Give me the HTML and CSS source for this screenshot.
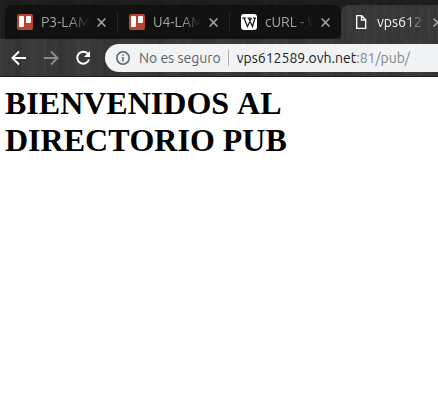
FILE: index.html
```
<!DOCTYPE html>
<html lang="es">
<head>
<meta charset="utf-8">
<title>vps612589.ovh.net:81/pub/</title>
<link rel="stylesheet" href="styles.css">
</head>
<body>
<header class="browser">
  <div class="tabs" role="tablist">
    <div class="tab" role="tab">
      <svg class="favicon" viewBox="0 0 16 16"><rect width="16" height="16" rx="2" fill="#b8432f"/><rect x="2" y="2" width="5" height="11" rx="1" fill="#fff"/><rect x="9" y="2" width="5" height="7" rx="1" fill="#fff"/></svg>
      <span class="title">P3-LAMP</span>
      <button class="close" aria-label="Cerrar"><svg viewBox="0 0 8 8"><path d="M0.5 0.5l7 7M7.5 0.5l-7 7"/></svg></button>
    </div>
    <div class="tab" role="tab">
      <svg class="favicon" viewBox="0 0 16 16"><rect width="16" height="16" rx="2" fill="#b8432f"/><rect x="2" y="2" width="5" height="11" rx="1" fill="#fff"/><rect x="9" y="2" width="5" height="7" rx="1" fill="#fff"/></svg>
      <span class="title">U4-LAMP</span>
      <button class="close" aria-label="Cerrar"><svg viewBox="0 0 8 8"><path d="M0.5 0.5l7 7M7.5 0.5l-7 7"/></svg></button>
    </div>
    <div class="tab last" role="tab">
      <svg class="favicon" viewBox="0 0 16 16"><rect width="16" height="16" rx="3" fill="#fff"/><path d="M1 4h4M6.500 4h3.500M12 4h3M3 4l3.500 8.500L10.500 4M7.500 4l4 8.500L14 4" fill="none" stroke="#111" stroke-width="1.200"/></svg>
      <span class="title">cURL - W</span>
      <button class="close" aria-label="Cerrar"><svg viewBox="0 0 8 8"><path d="M0.5 0.5l7 7M7.5 0.5l-7 7"/></svg></button>
    </div>
    <div class="tab active" role="tab" aria-selected="true">
      <svg class="favicon" viewBox="0 0 16 16"><path d="M3.700 1.700h5l4 4v8.600h-9zM8.500 1.700v4.300h4" fill="none" stroke="#fff" stroke-width="1.300"/></svg>
      <span class="title">vps612</span>
      <button class="close" aria-label="Cerrar"><svg viewBox="0 0 8 8"><path d="M0.5 0.5l7 7M7.5 0.5l-7 7"/></svg></button>
    </div>
  </div>
  <nav class="toolbar">
    <button class="nav" aria-label="Atrás"><svg viewBox="0 0 16 16"><path d="M15 8H2M8 1.500L1.500 8 8 14.500"/></svg></button>
    <button class="nav dim" aria-label="Adelante"><svg viewBox="0 0 16 16"><path d="M1 8h13M8 1.500L14.500 8 8 14.500"/></svg></button>
    <button class="nav" aria-label="Recargar"><svg viewBox="0 0 16 16"><path d="M13.200 4.200A6 6 0 1 0 14 9.500"/><path d="M15 1v6H9z" class="head"/></svg></button>
    <div class="address">
      <svg class="info" viewBox="0 0 14 14"><circle cx="7" cy="7" r="6.200"/><path d="M7 6v4.500M7 3.300v1.500"/></svg>
      <span class="security">No es seguro</span>
      <a class="url" href="#">vps612589.ovh.net<span>:81/pub/</span></a>
    </div>
  </nav>
</header>
<main class="page">
  <h1>BIENVENIDOS AL DIRECTORIO PUB</h1>
</main>
</body>
</html>
```
FILE: styles.css
```
* { box-sizing: border-box; }
body {
  margin: 0;
  background: #fff;
  overflow-x: hidden;
}
.browser {
  font-family: Ubuntu, "Noto Sans", sans-serif;
  font-size: 14px;
  background:
    repeating-linear-gradient(90deg, rgba(255,255,255,.02) 0 2px, transparent 2px 5px, rgba(0,0,0,.05) 5px 6px, transparent 6px 11px),
    repeating-linear-gradient(90deg, #383838 0, #343434 19px, #3b3b3b 31px, #383838 47px);
  border-bottom: 1px solid #1c1a1b;
  overflow: hidden;
}
button {
  padding: 0;
  border: 0;
  background: none;
}
svg { display: block; }
.tabs {
  display: flex;
  height: 39px;
  padding: 5px 0 0 5px;
  background: rgba(0,0,0,.45);
}
.tab {
  display: flex;
  align-items: center;
  flex: 0 0 112px;
  min-width: 0;
  padding: 0 11px 0 12px;
  color: #a2a6a9;
  background: rgba(10,10,10,.65);
  position: relative;
}
.tab:first-child { border-radius: 8px 0 0 0; }
.tab.last { border-radius: 0 8px 8px 0; }
.tab:not(.last):not(.active)::after {
  content: "";
  position: absolute;
  right: -1px;
  top: 7px;
  width: 1px;
  height: 20px;
  background: #555;
}
.tab.active {
  color: #f4f4f4;
  background: repeating-linear-gradient(90deg, #383838 0 3px, #353535 3px 5px, #3a3a3a 5px 9px);
  border-radius: 8px 8px 0 0;
}
.favicon {
  flex: none;
  width: 16px;
  height: 16px;
}
.title {
  flex: 1;
  margin: 0 8px;
  min-width: 0;
  overflow: hidden;
  white-space: nowrap;
  line-height: 20px;
  mask-image: linear-gradient(90deg, #000 60%, transparent);
}
.close svg {
  width: 9px;
  height: 9px;
  fill: none;
  stroke: #aaa;
  stroke-width: 1.300;
  overflow: visible;
}
.toolbar {
  display: flex;
  align-items: center;
  height: 37px;
  padding-left: 11px;
  gap: 16px;
}
.nav svg {
  width: 16px;
  height: 16px;
  fill: none;
  stroke: #fff;
  stroke-width: 2;
}
.nav .head {
  fill: #fff;
  stroke: none;
}
.nav.dim svg { stroke: #8b8b8b; }
.address {
  display: flex;
  align-items: center;
  flex: 1;
  height: 28px;
  margin-right: -20px;
  margin-left: -2px;
  padding-left: 11px;
  border-radius: 14px;
  background: #f1f3f4;
  white-space: nowrap;
}
.info {
  width: 14px;
  height: 14px;
  fill: none;
  stroke: #5f6368;
  stroke-width: 1.500;
}
.security {
  margin-left: 9px;
  padding-right: 7px;
  border-right: 1px solid #aeb1b4;
  color: #5f6368;
  line-height: 16px;
}
.url {
  margin-left: 8px;
  color: #202124;
  text-decoration: none;
}
.url span { color: #80868b; }
.page { padding: 8px 5px; }
h1 {
  margin: 0;
  color: #000;
  font: bold 32px/37px "Liberation Serif", serif;
  font-kerning: none;
}
```
